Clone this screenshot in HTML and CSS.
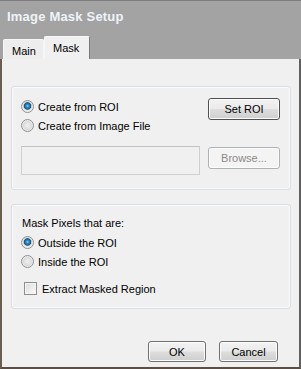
FILE: index.html
```html
<!DOCTYPE html>
<html lang="en">
<head>
    <meta charset="UTF-8">
    <meta name="viewport" content="width=device-width, initial-scale=1.0">
    <title>Image Mask Setup</title>
    <link rel="stylesheet" href="styles.css">
</head>
<body>
    <div class="dialog">
        <div class="header">
            <div class="title">Image Mask Setup</div>
            <div class="tabs">
                <div class="tab">Main</div>
                <div class="tab active">Mask</div>
            </div>
        </div>
        <div class="content">
            <div class="group roi-group">
                <div class="col-left">
                    <label class="option"><span class="radio checked"></span>Create from ROI</label>
                    <label class="option"><span class="radio"></span>Create from Image File</label>
                    <div class="field"></div>
                </div>
                <div class="col-right">
                    <button class="btn set-roi">Set ROI</button>
                    <button class="btn browse" disabled>Browse...</button>
                </div>
            </div>
            <div class="group pixel-group">
                <div class="caption">Mask Pixels that are:</div>
                <label class="option"><span class="radio checked"></span>Outside the ROI</label>
                <label class="option"><span class="radio"></span>Inside the ROI</label>
                <label class="option check-row"><span class="checkbox"></span>Extract Masked Region</label>
            </div>
            <div class="footer">
                <button class="btn ok">OK</button>
                <button class="btn cancel">Cancel</button>
            </div>
        </div>
    </div>
</body>
</html>
```

FILE: styles.css
```css
body {
    margin: 0;
    font-family: "Liberation Sans", Arial, sans-serif;
    font-size: 11px;
    color: #000;
}
.dialog {
    width: 301px;
    height: 369px;
    display: flex;
    flex-direction: column;
}
.header {
    box-sizing: border-box;
    height: 59px;
    background-color: #a3a3a3;
    border-top: 1px solid #7d7d7d;
    display: flex;
    flex-direction: column;
    justify-content: space-between;
}
.title {
    padding: 8px 0 0 7px;
    font-size: 13px;
    font-weight: bold;
    letter-spacing: 0.2px;
    line-height: 16px;
    color: #eef3f9;
}
.tabs {
    display: flex;
    align-items: flex-end;
    padding-left: 3px;
}
.tab {
    box-sizing: border-box;
    width: 41px;
    height: 20px;
    padding: 4px 0 0 8px;
    line-height: 14px;
    background-color: #ededed;
    border: 1px solid #f7f7f7;
    border-bottom: none;
    border-radius: 2px 2px 0 0;
}
.tab.active {
    width: 46px;
    height: 23px;
    padding: 4px 0 0 8px;
    background-color: #f0f0f0;
    border-right: 1px solid #7b7b7b;
}
.content {
    flex: 1;
    display: flex;
    flex-direction: column;
    padding: 27px 8px 0 9px;
    background-color: #f0f0f0;
    border-left: 2px solid #6c5d51;
    border-right: 2px solid #5f5f5f;
    border-bottom: 2px solid #5d4e43;
}
.group {
    box-sizing: border-box;
    border: 1px solid #d5dfe5;
    border-radius: 3px;
    box-shadow: inset 0 0 0 1px #fafafa;
}
.roi-group {
    height: 104px;
    display: flex;
    gap: 8px;
    padding: 10px 10px 0 9px;
}
.col-left {
    flex: 1;
    display: flex;
    flex-direction: column;
}
.col-right {
    width: 72px;
    display: flex;
    flex-direction: column;
}
.option {
    display: flex;
    align-items: center;
    height: 19px;
}
.radio {
    box-sizing: border-box;
    width: 13px;
    height: 13px;
    margin-right: 4px;
    border-radius: 50%;
    border: 1px solid #8e8f8f;
    background: radial-gradient(circle at 50% 50%, #f1f1f1 0, #dcdcdc 4px, #f4f4f4 6px);
}
.radio.checked {
    background: radial-gradient(circle at 50% 45%, #7fd0f7 0, #2d8bc9 1.5px, #18557f 3.4px, #bdbdbd 3.9px, #e4e4e4 4.6px, #f5f5f5 6px);
}
.checkbox {
    box-sizing: border-box;
    width: 13px;
    height: 13px;
    margin: 0 5px 0 3px;
    border: 1px solid #8f8f8f;
    background: linear-gradient(135deg, #dcdcdc, #fbfbfb);
    box-shadow: inset 0 0 0 1px #f4f4f4;
}
.field {
    box-sizing: border-box;
    height: 29px;
    margin-top: 11px;
    border: 1px solid #cfcfcf;
    border-top-color: #c2c2c2;
    background-color: #f0f0f0;
}
.btn {
    box-sizing: border-box;
    height: 22px;
    padding: 0;
    font-family: "Liberation Sans", Arial, sans-serif;
    font-size: 11px;
    color: #000;
    border: 1px solid #707070;
    border-radius: 3px;
    background: linear-gradient(#f2f2f2 0%, #ebebeb 48%, #dddddd 52%, #cfcfcf 100%);
    box-shadow: inset 0 0 0 1px #fcfcfc;
}
.set-roi {
    margin-top: 1px;
    border-color: #505050;
}
.browse {
    margin-top: 27px;
    color: #8a8a8a;
    border-color: #adb2b5;
    background: #f4f4f4;
}
.pixel-group {
    height: 105px;
    margin-top: 14px;
    padding: 9px 9px 0 9px;
}
.caption {
    line-height: 19px;
    padding-left: 1px;
}
.check-row {
    margin-top: 8px;
}
.footer {
    display: flex;
    justify-content: flex-end;
    gap: 13px;
    margin-top: 32px;
    padding-right: 13px;
}
.footer .btn {
    height: 21px;
}
.ok {
    width: 58px;
}
.cancel {
    width: 59px;
}
```
